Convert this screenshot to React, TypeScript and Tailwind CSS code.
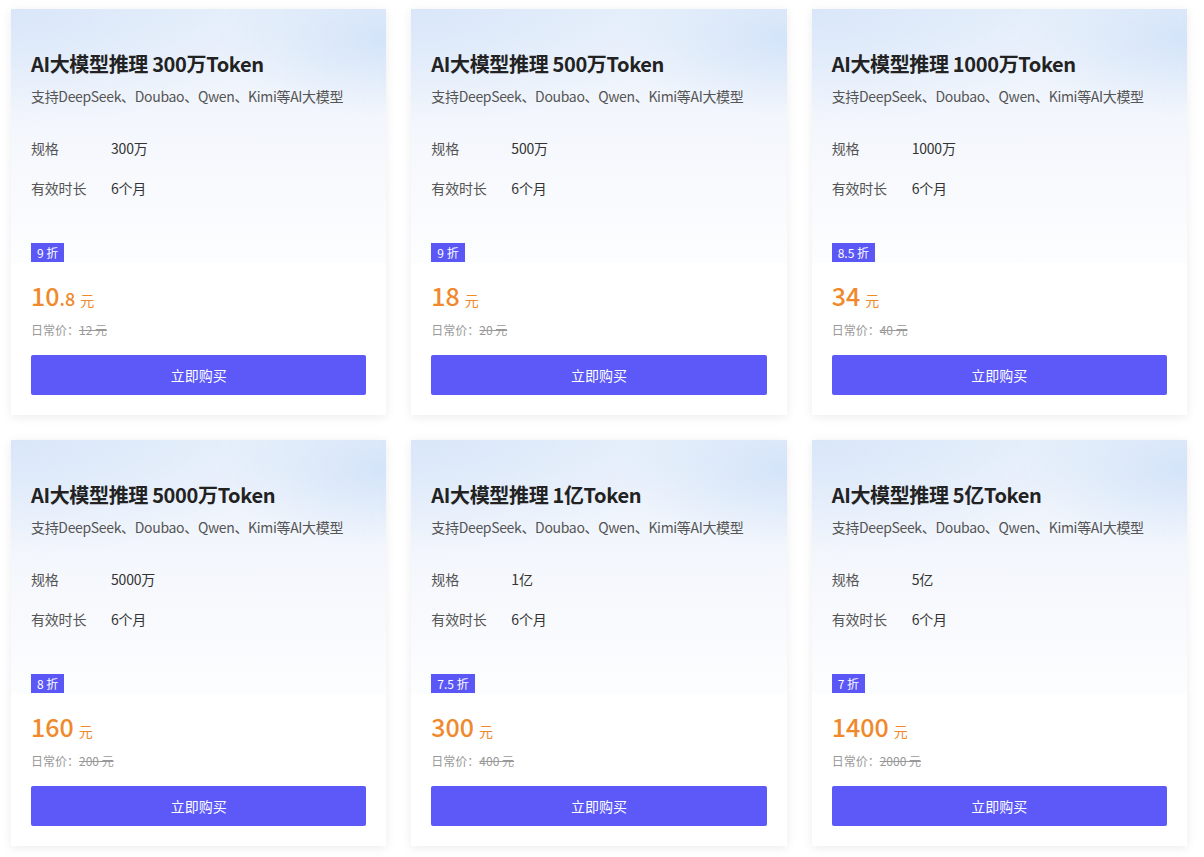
import React from 'react';

interface Plan {
  amount: string;
  spec: string;
  discount: string;
  priceInt: string;
  priceDec?: string;
  original: string;
}

const plans: Plan[] = [
  { amount: '300万', spec: '300万', discount: '9 折', priceInt: '10', priceDec: '.8', original: '12 元' },
  { amount: '500万', spec: '500万', discount: '9 折', priceInt: '18', original: '20 元' },
  { amount: '1000万', spec: '1000万', discount: '8.5 折', priceInt: '34', original: '40 元' },
  { amount: '5000万', spec: '5000万', discount: '8 折', priceInt: '160', original: '200 元' },
  { amount: '1亿', spec: '1亿', discount: '7.5 折', priceInt: '300', original: '400 元' },
  { amount: '5亿', spec: '5亿', discount: '7 折', priceInt: '1400', original: '2000 元' },
];

const PlanCard: React.FC<{ plan: Plan }> = ({ plan }) => {
  return (
    <div className="bg-white shadow-[0_2px_10px_rgba(0,0,0,0.08)] flex flex-col">
      <div className="h-[254px] px-5 pt-[41px] flex flex-col bg-[radial-gradient(ellipse_45%_30%_at_100%_12%,rgba(196,219,247,0.6),rgba(255,255,255,0)),radial-gradient(ellipse_75%_45%_at_0%_0%,rgba(214,229,249,0.85),rgba(255,255,255,0)),linear-gradient(180deg,#e8f0fb_0%,#f1f5fc_35%,#f7f9fd_65%,#fcfdfe_100%)]">
        <h3 className="text-[20px] leading-[28px] font-bold text-[#222] tracking-[-0.35px]">
          AI大模型推理 {plan.amount}Token
        </h3>
        <p className="mt-2 text-[14px] leading-5 text-[#555] tracking-[-0.33px]">
          支持DeepSeek、Doubao、Qwen、Kimi等AI大模型
        </p>
        <div className="mt-8 flex flex-col gap-5 text-[14px] leading-5 tracking-[-0.2px]">
          <div className="flex">
            <span className="w-20 text-[#555]">规格</span>
            <span className="text-[#333]">{plan.spec}</span>
          </div>
          <div className="flex">
            <span className="w-20 text-[#555]">有效时长</span>
            <span className="text-[#333]">6个月</span>
          </div>
        </div>
        <div className="mt-auto">
          <span className="inline-block bg-[#5b57f6] text-white text-[12px] leading-[19px] px-[6px]">
            {plan.discount}
          </span>
        </div>
      </div>
      <div className="px-5 pt-[16px] pb-5 flex flex-col">
        <div className="flex items-baseline text-[#f0892c] h-8">
          <span className="text-[25px] leading-8 font-medium">{plan.priceInt}</span>
          {plan.priceDec && <span className="text-[18px] font-medium">{plan.priceDec}</span>}
          <span className="text-[14px] ml-[5px]">元</span>
        </div>
        <div className="mt-[9px] text-[12px] leading-5 text-[#999]">
          日常价：<span className="line-through">{plan.original}</span>
        </div>
        <button className="mt-[15px] h-10 w-full bg-[#5c59f8] text-white text-[14px] rounded-[2px]">
          立即购买
        </button>
      </div>
    </div>
  );
};

export default function App() {
  return (
    <div className="min-h-screen bg-white pl-[11px] pr-[17px] pt-[9px] pb-[10px] font-['Microsoft_YaHei','Noto_Sans_CJK_SC','Noto_Sans',sans-serif]">
      <div className="grid grid-cols-3 gap-x-[25px] gap-y-[25px]">
        {plans.map((p, i) => (
          <PlanCard key={i} plan={p} />
        ))}
      </div>
    </div>
  );
}
